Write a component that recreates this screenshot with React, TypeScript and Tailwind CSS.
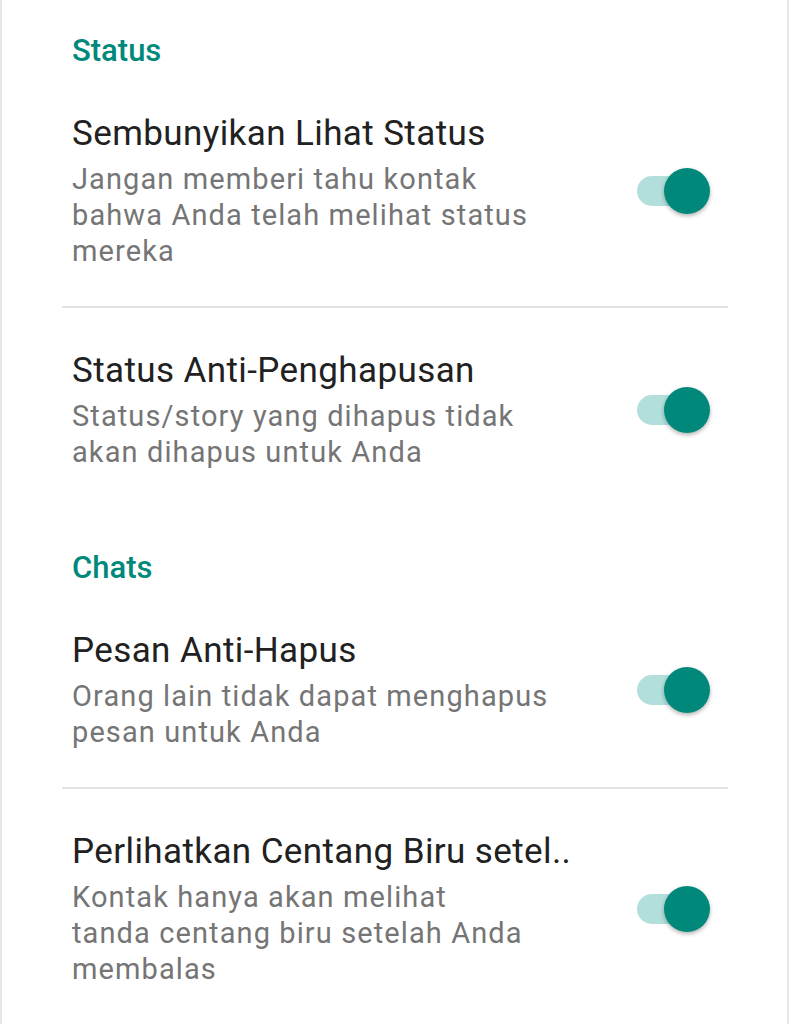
import React from 'react';

interface SettingItem {
  title: string;
  lines: string[];
}

interface Section {
  header: string;
  items: SettingItem[];
}

const sections: Section[] = [
  {
    header: 'Status',
    items: [
      {
        title: 'Sembunyikan Lihat Status',
        lines: ['Jangan memberi tahu kontak', 'bahwa Anda telah melihat status', 'mereka'],
      },
      {
        title: 'Status Anti-Penghapusan',
        lines: ['Status/story yang dihapus tidak', 'akan dihapus untuk Anda'],
      },
    ],
  },
  {
    header: 'Chats',
    items: [
      {
        title: 'Pesan Anti-Hapus',
        lines: ['Orang lain tidak dapat menghapus', 'pesan untuk Anda'],
      },
      {
        title: 'Perlihatkan Centang Biru setel..',
        lines: ['Kontak hanya akan melihat', 'tanda centang biru setelah Anda', 'membalas'],
      },
    ],
  },
];

// Material switch, always on in this screen
const Toggle: React.FC = () => (
  <div className="relative h-[46px] w-[73px] shrink-0">
    <div className="absolute left-0 top-[8px] h-[30px] w-[64px] rounded-full bg-[#b2dfdb]" />
    <div className="absolute right-0 top-0 h-[46px] w-[46px] rounded-full bg-[#00897b] shadow-[0_2px_4px_rgba(0,0,0,0.3)]" />
  </div>
);

const SettingRow: React.FC<{ item: SettingItem }> = ({ item }) => (
  <div className="flex items-center pl-[70px] pr-[77px] pt-[41px] pb-[37px]">
    <div className="flex-1">
      <div className="whitespace-nowrap text-[35px] leading-[44px] tracking-[0.4px] text-[#212121]">
        {item.title}
      </div>
      <div className="mt-[5px] text-[29px] leading-[36px] tracking-[1.1px] text-[#757575]">
        {item.lines.map((line) => (
          <div key={line} className="whitespace-nowrap">
            {line}
          </div>
        ))}
      </div>
    </div>
    <Toggle />
  </div>
);

export default function App() {
  return (
    <div
      className="min-h-[1024px] w-[789px] overflow-hidden border-l-2 border-r-2 border-[#e6e6e6] bg-white"
      style={{ fontFamily: 'Roboto, "Noto Sans", sans-serif' }}
    >
      {sections.map((section, si) => (
        <div key={section.header}>
          <div
            className={`pl-[70px] text-[31px] font-medium leading-[40px] text-[#00897b] ${
              si === 0 ? 'pt-[31px]' : 'pt-[41px]'
            }`}
          >
            {section.header}
          </div>
          {section.items.map((item, ii) => (
            <div key={item.title}>
              {ii > 0 && <div className="ml-[60px] mr-[59px] h-[2px] bg-[#e4e4e4]" />}
              <SettingRow item={item} />
            </div>
          ))}
        </div>
      ))}
    </div>
  );
}
